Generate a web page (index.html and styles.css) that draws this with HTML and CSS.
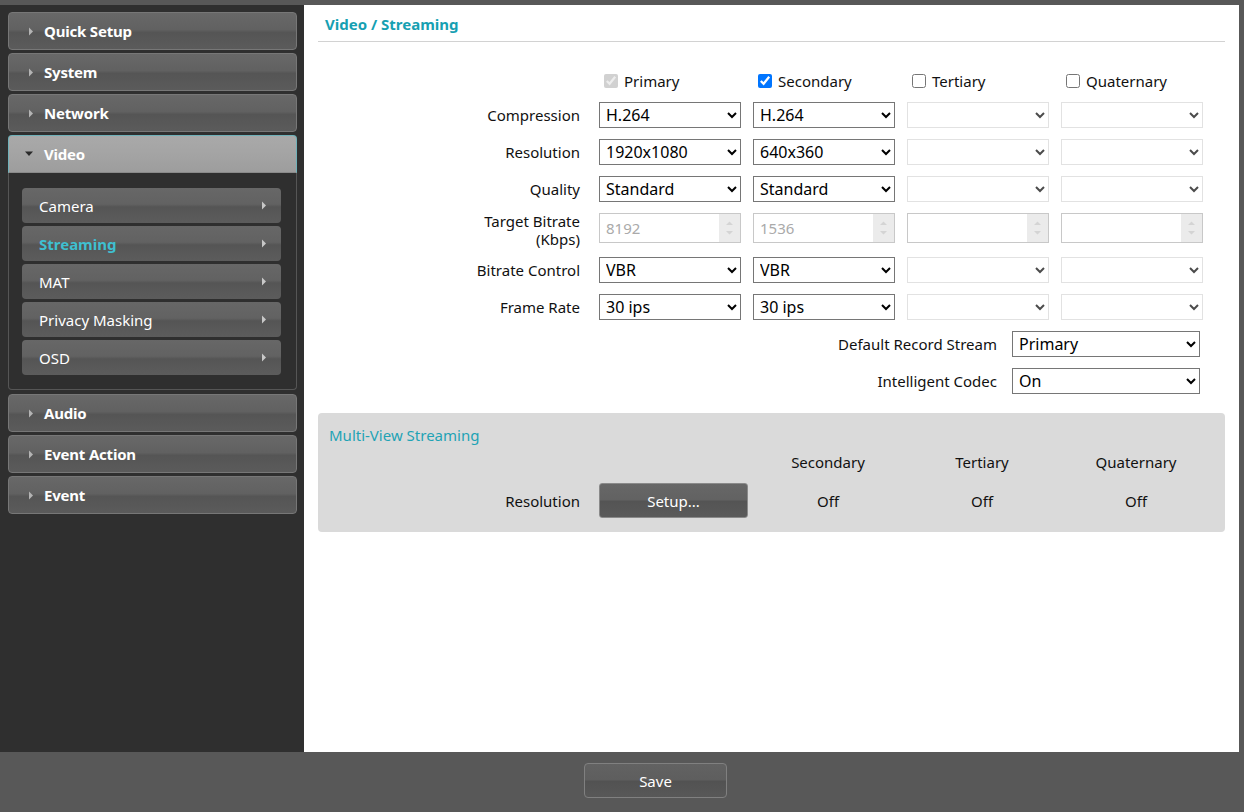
FILE: index.html
```html
<!DOCTYPE html>
<html lang="en">
<head>
    <meta charset="UTF-8">
    <title>Video / Streaming</title>
    <link rel="stylesheet" href="styles.css">
</head>
<body>
    <div class="page">
        <aside class="sidebar">
            <div class="menu-item"><svg class="caret" width="6" height="9" viewBox="0 0 6 9"><path d="M1 0.5 L5 4.5 L1 8.5 Z" fill="#b4b4b4"/></svg><span>Quick Setup</span></div>
            <div class="menu-item"><svg class="caret" width="6" height="9" viewBox="0 0 6 9"><path d="M1 0.5 L5 4.5 L1 8.5 Z" fill="#b4b4b4"/></svg><span>System</span></div>
            <div class="menu-item"><svg class="caret" width="6" height="9" viewBox="0 0 6 9"><path d="M1 0.5 L5 4.5 L1 8.5 Z" fill="#b4b4b4"/></svg><span>Network</span></div>
            <div class="menu-item open"><svg class="caret-down" width="10" height="6" viewBox="0 0 10 6"><path d="M1 0.5 L9 0.5 L5 5 Z" fill="#2a2a2a"/></svg><span>Video</span></div>
            <div class="submenu">
                <div class="sub-item"><span>Camera</span><svg width="6" height="9" viewBox="0 0 6 9"><path d="M1 0.5 L5 4.5 L1 8.5 Z" fill="#c8c8c8"/></svg></div>
                <div class="sub-item active"><span>Streaming</span><svg width="6" height="9" viewBox="0 0 6 9"><path d="M1 0.5 L5 4.5 L1 8.5 Z" fill="#c8c8c8"/></svg></div>
                <div class="sub-item"><span>MAT</span><svg width="6" height="9" viewBox="0 0 6 9"><path d="M1 0.5 L5 4.5 L1 8.5 Z" fill="#c8c8c8"/></svg></div>
                <div class="sub-item"><span>Privacy Masking</span><svg width="6" height="9" viewBox="0 0 6 9"><path d="M1 0.5 L5 4.5 L1 8.5 Z" fill="#c8c8c8"/></svg></div>
                <div class="sub-item"><span>OSD</span><svg width="6" height="9" viewBox="0 0 6 9"><path d="M1 0.5 L5 4.5 L1 8.5 Z" fill="#c8c8c8"/></svg></div>
            </div>
            <div class="menu-item"><svg class="caret" width="6" height="9" viewBox="0 0 6 9"><path d="M1 0.5 L5 4.5 L1 8.5 Z" fill="#b4b4b4"/></svg><span>Audio</span></div>
            <div class="menu-item"><svg class="caret" width="6" height="9" viewBox="0 0 6 9"><path d="M1 0.5 L5 4.5 L1 8.5 Z" fill="#b4b4b4"/></svg><span>Event Action</span></div>
            <div class="menu-item"><svg class="caret" width="6" height="9" viewBox="0 0 6 9"><path d="M1 0.5 L5 4.5 L1 8.5 Z" fill="#b4b4b4"/></svg><span>Event</span></div>
        </aside>

        <main class="content">
            <h1 class="page-title">Video / Streaming</h1>

            <div class="stream-grid">
                <div></div>
                <label class="stream-check"><input type="checkbox" checked disabled>Primary</label>
                <label class="stream-check"><input type="checkbox" checked>Secondary</label>
                <label class="stream-check"><input type="checkbox">Tertiary</label>
                <label class="stream-check"><input type="checkbox">Quaternary</label>

                <div class="row-label">Compression</div>
                <select><option>H.264</option></select>
                <select><option>H.264</option></select>
                <select disabled></select>
                <select disabled></select>

                <div class="row-label">Resolution</div>
                <select><option>1920x1080</option></select>
                <select><option>640x360</option></select>
                <select disabled></select>
                <select disabled></select>

                <div class="row-label">Quality</div>
                <select><option>Standard</option></select>
                <select><option>Standard</option></select>
                <select disabled></select>
                <select disabled></select>

                <div class="row-label two-line">Target Bitrate<br>(Kbps)</div>
                <div class="numbox"><span>8192</span><div class="spin"><svg width="9" height="20" viewBox="0 0 9 20"><path d="M1 7 L4.5 3.5 L8 7 Z M1 13 L4.5 16.5 L8 13 Z" fill="#d4d4d4"/></svg></div></div>
                <div class="numbox"><span>1536</span><div class="spin"><svg width="9" height="20" viewBox="0 0 9 20"><path d="M1 7 L4.5 3.5 L8 7 Z M1 13 L4.5 16.5 L8 13 Z" fill="#d4d4d4"/></svg></div></div>
                <div class="numbox empty"><span></span><div class="spin"><svg width="9" height="20" viewBox="0 0 9 20"><path d="M1 7 L4.5 3.5 L8 7 Z M1 13 L4.5 16.5 L8 13 Z" fill="#d4d4d4"/></svg></div></div>
                <div class="numbox empty"><span></span><div class="spin"><svg width="9" height="20" viewBox="0 0 9 20"><path d="M1 7 L4.5 3.5 L8 7 Z M1 13 L4.5 16.5 L8 13 Z" fill="#d4d4d4"/></svg></div></div>

                <div class="row-label">Bitrate Control</div>
                <select><option>VBR</option></select>
                <select><option>VBR</option></select>
                <select disabled></select>
                <select disabled></select>

                <div class="row-label">Frame Rate</div>
                <select><option>30 ips</option></select>
                <select><option>30 ips</option></select>
                <select disabled></select>
                <select disabled></select>
            </div>

            <div class="extra-row">
                <span class="row-label">Default Record Stream</span>
                <select class="wide"><option>Primary</option></select>
            </div>
            <div class="extra-row">
                <span class="row-label">Intelligent Codec</span>
                <select class="wide"><option>On</option></select>
            </div>

            <section class="multiview">
                <h2 class="multiview-title">Multi-View Streaming</h2>
                <div class="multiview-grid">
                    <div></div>
                    <div></div>
                    <div class="mv-head">Secondary</div>
                    <div class="mv-head">Tertiary</div>
                    <div class="mv-head">Quaternary</div>

                    <div class="row-label">Resolution</div>
                    <div><button class="btn-setup">Setup...</button></div>
                    <div class="mv-value">Off</div>
                    <div class="mv-value">Off</div>
                    <div class="mv-value">Off</div>
                </div>
            </section>
        </main>
    </div>

    <footer class="savebar">
        <button class="btn-save">Save</button>
    </footer>
</body>
</html>
```

FILE: styles.css
```css
html, body {
    margin: 0;
    height: 100%;
}

body {
    background: #585858;
    font-family: 'Noto Sans', 'Open Sans', sans-serif;
    font-size: 15px;
    color: #111;
}

.page {
    display: flex;
    height: 747px;
    padding-top: 5px;
    padding-right: 5px;
}

/* sidebar */
.sidebar {
    width: 304px;
    flex-shrink: 0;
    background: #2f2f2f;
    padding: 7px 7px 0 8px;
    box-sizing: border-box;
}

.menu-item {
    display: flex;
    align-items: center;
    height: 38px;
    box-sizing: border-box;
    margin-bottom: 3px;
    padding-left: 19px;
    border: 1px solid #777;
    border-radius: 4px;
    background: linear-gradient(#686868 0%, #616161 46%, #555 54%, #5b5b5b 100%);
    color: #fff;
    font-weight: bold;
    font-size: 15px;
    letter-spacing: -0.2px;
}

.menu-item .caret {
    margin-right: 10px;
}

.menu-item.open {
    margin-top: 1px;
    margin-bottom: 0;
    padding-left: 15px;
    background: linear-gradient(#a9a9a9 0%, #a4a4a4 50%, #9d9d9d 100%);
    border-color: #6fb1b9;
    border-bottom-color: #8a8a8a;
    border-radius: 4px 4px 0 0;
}

.menu-item .caret-down {
    margin-right: 10px;
}

.submenu {
    border: 1px solid #565656;
    border-top: none;
    border-radius: 0 0 4px 4px;
    padding: 15px 15px 14px 13px;
    margin-bottom: 4px;
}

.sub-item {
    display: flex;
    align-items: center;
    justify-content: space-between;
    height: 35px;
    box-sizing: border-box;
    margin-bottom: 3px;
    padding: 0 14px 0 17px;
    border-radius: 4px;
    background: linear-gradient(#676767 0%, #626262 46%, #555 54%, #5c5c5c 100%);
    color: #fff;
    font-size: 15px;
}

.sub-item:last-child {
    margin-bottom: 0;
}

.sub-item.active span {
    color: #3fbfd0;
    font-weight: bold;
}

/* main area */
.content {
    flex: 1;
    background: #fff;
    padding: 0 14px;
}

.page-title {
    margin: 0;
    padding: 9px 7px 0;
    height: 27px;
    border-bottom: 1px solid #d2d2d2;
    color: #16a0b2;
    font-size: 15px;
    font-weight: bold;
    line-height: 20px;
}

.stream-grid {
    display: grid;
    grid-template-columns: 269px repeat(4, 142px);
    column-gap: 12px;
    row-gap: 11px;
    align-items: center;
    margin-top: 29px;
}

.row-label {
    text-align: right;
    font-size: 15px;
    line-height: 20px;
    color: #111;
}

.stream-grid .row-label {
    padding-right: 7px;
}

.row-label.two-line {
    line-height: 18px;
    margin: -1px 0 -2px;
    align-self: start;
}

.stream-check {
    display: flex;
    align-items: center;
    height: 20px;
    font-size: 15px;
    padding-left: 2px;
}

.stream-check input {
    margin: 0 6px 0 3px;
    width: 14px;
    height: 14px;
}

select {
    width: 142px;
    height: 26px;
    font-family: 'Noto Sans', 'Open Sans', sans-serif;
    font-size: 16px;
    color: #000;
    background: #fff;
    padding: 0 2px;
}

select.wide {
    width: 188px;
}

.numbox {
    display: flex;
    align-self: start;
    width: 142px;
    height: 30px;
    box-sizing: border-box;
    border: 1px solid #c8c8c8;
    background: #fff;
}

.numbox span {
    flex: 1;
    padding-left: 6px;
    line-height: 28px;
    font-size: 15px;
    color: #aaa;
}

.numbox .spin {
    width: 21px;
    display: flex;
    align-items: center;
    justify-content: center;
    background: #ebebeb;
}

.extra-row {
    display: flex;
    align-items: center;
    justify-content: flex-end;
    gap: 15px;
    width: 882px;
    margin-top: 11px;
}

/* multi-view box */
.multiview {
    margin-top: 19px;
    background: #dadada;
    border-radius: 4px;
    padding: 12px 0 14px;
}

.multiview-title {
    margin: 0 0 7px 11px;
    font-size: 15px;
    font-weight: normal;
    line-height: 20px;
    color: #1fa3b5;
}

.multiview-grid {
    display: grid;
    grid-template-columns: 281px 152px repeat(3, 154px);
    row-gap: 11px;
    align-items: center;
}

.multiview-grid .row-label {
    padding-right: 19px;
}

.mv-head,
.mv-value {
    text-align: center;
    font-size: 15px;
    line-height: 20px;
    color: #111;
}

.btn-setup {
    width: 149px;
    height: 35px;
    border: 1px solid #8a8a8a;
    border-radius: 3px;
    background: linear-gradient(#676767 0%, #626262 48%, #545454 52%, #5a5a5a 100%);
    color: #fff;
    font-family: 'Noto Sans', 'Open Sans', sans-serif;
    font-size: 15px;
    cursor: pointer;
}

/* bottom bar */
.savebar {
    height: 60px;
    box-sizing: border-box;
    padding: 11px 0 0 584px;
}

.btn-save {
    width: 143px;
    height: 35px;
    border: 1px solid #808080;
    border-radius: 4px;
    background: linear-gradient(#626262 0%, #5e5e5e 48%, #525252 52%, #585858 100%);
    color: #fff;
    font-family: 'Noto Sans', 'Open Sans', sans-serif;
    font-size: 15px;
    cursor: pointer;
}
```
